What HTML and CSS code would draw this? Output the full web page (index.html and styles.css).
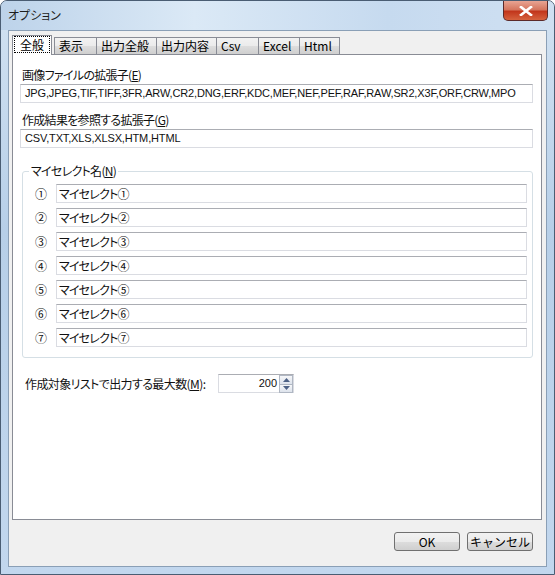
FILE: index.html
```html
<!DOCTYPE html>
<html lang="ja">
  <head>
    <meta charset="UTF-8" />
    <title>オプション</title>
    <link rel="stylesheet" href="styles.css">
  </head>
  <body>
    <div class="window">
      <div class="titlebar">
        <span class="title">オプション</span>
        <button class="close-btn">
          <svg width="14" height="10" viewBox="0 0 14 10">
            <path d="M2 1 L12 9 M12 1 L2 9" stroke="#fff" stroke-width="2.6" stroke-linecap="square" />
          </svg>
        </button>
      </div>

      <div class="client">
        <div class="tabs">
          <div class="tab active"><span class="focus">全般</span></div>
          <div class="tab tab-2">表示</div>
          <div class="tab tab-4">出力全般</div>
          <div class="tab tab-4">出力内容</div>
          <div class="tab tab-2">Csv</div>
          <div class="tab tab-excel">Excel</div>
          <div class="tab tab-html">Html</div>
        </div>

        <div class="panel">
          <label class="field-label first">画像ファイルの拡張子(<u>E</u>)</label>
          <div class="textbox">JPG,JPEG,TIF,TIFF,3FR,ARW,CR2,DNG,ERF,KDC,MEF,NEF,PEF,RAF,RAW,SR2,X3F,ORF,CRW,MPO</div>

          <label class="field-label">作成結果を参照する拡張子(<u>G</u>)</label>
          <div class="textbox">CSV,TXT,XLS,XLSX,HTM,HTML</div>

          <fieldset class="group">
            <legend>マイセレクト名(<u>N</u>)</legend>
            <div class="select-row"><span class="num">①</span><div class="textbox">マイセレクト①</div></div>
            <div class="select-row"><span class="num">②</span><div class="textbox">マイセレクト②</div></div>
            <div class="select-row"><span class="num">③</span><div class="textbox">マイセレクト③</div></div>
            <div class="select-row"><span class="num">④</span><div class="textbox">マイセレクト④</div></div>
            <div class="select-row"><span class="num">⑤</span><div class="textbox">マイセレクト⑤</div></div>
            <div class="select-row"><span class="num">⑥</span><div class="textbox">マイセレクト⑥</div></div>
            <div class="select-row"><span class="num">⑦</span><div class="textbox">マイセレクト⑦</div></div>
          </fieldset>

          <div class="max-row">
            <span class="max-label">作成対象リストで出力する最大数(<u>M</u>):</span>
            <div class="spinner">
              <span class="spin-value">200</span>
              <div class="spin-buttons">
                <div class="spin-btn"><svg width="7" height="4" viewBox="0 0 7 4"><path d="M0 4 L3.5 0 L7 4 Z" fill="#4d6185" /></svg></div>
                <div class="spin-btn"><svg width="7" height="4" viewBox="0 0 7 4"><path d="M0 0 L3.5 4 L7 0 Z" fill="#4d6185" /></svg></div>
              </div>
            </div>
          </div>
        </div>

        <div class="footer">
          <button class="btn">OK</button>
          <button class="btn">キャンセル</button>
        </div>
      </div>
    </div>
  </body>
</html>
```
FILE: styles.css
```css
body {
  margin: 0;
  padding: 0;
  background-color: #ffffff;
  font-family: "Noto Sans CJK JP", "Liberation Sans", sans-serif;
  font-size: 12px;
  font-feature-settings: "palt";
  color: #111;
}

.window {
  width: 555px;
  height: 575px;
  box-sizing: border-box;
  border-radius: 7px 7px 0 0;
  border: 1px solid #4a5d73;
  background: linear-gradient(180deg, #bcd3ea 0%, #cfe0f1 5%, #b7cfe8 40%, #c2d7ee 100%);
  display: flex;
  flex-direction: column;
}

.titlebar {
  height: 29px;
  display: flex;
  align-items: flex-start;
  justify-content: space-between;
  background: linear-gradient(90deg, #bdd3ea 0%, #dbe9f6 35%, #c6daef 70%, #cfe0f2 100%);
  border-radius: 6px 6px 0 0;
}

.title {
  margin: 5px 0 0 7px;
  font-size: 12px;
  color: #1e1e1e;
}

.close-btn {
  width: 45px;
  height: 20px;
  margin-right: 6px;
  border: 1px solid #5b2a2a;
  border-top: none;
  border-radius: 0 0 5px 5px;
  background: linear-gradient(180deg, #e8a493 0%, #d5765f 45%, #c2361c 55%, #d6623e 100%);
  display: flex;
  align-items: center;
  justify-content: center;
  padding: 0;
}

.client {
  margin: 0 7px 7px 7px;
  flex: 1;
  background-color: #f0f0f0;
  border: 1px solid #8a9fb6;
  padding: 3px 4px 0 3px;
  display: flex;
  flex-direction: column;
}

.tabs {
  display: flex;
  align-items: flex-end;
  height: 20px;
  padding-left: 2px;
  position: relative;
  z-index: 1;
}

.tab {
  height: 16px;
  box-sizing: content-box;
  padding: 0 0 0 4px;
  border: 1px solid #898c95;
  border-bottom: none;
  margin-right: -1px;
  background: linear-gradient(180deg, #f2f2f2 0%, #ebebeb 50%, #dddddd 51%, #cfcfcf 100%);
  line-height: 16px;
  font-size: 12px;
  color: #000;
  white-space: nowrap;
}

.tab-2 { width: 37px; }
.tab-4 { width: 55px; }
.tab-excel { width: 36px; }
.tab-html { width: 35px; }

.tab.active {
  width: auto;
  height: 19px;
  margin-right: 2px;
  margin-left: -2px;
  padding: 0 1px;
  background: #ffffff;
  margin-bottom: -1px;
  line-height: 18px;
}

.tab.active .focus {
  display: inline-block;
  border: 1px dotted #000;
  padding: 0 5px;
  line-height: 15px;
}

.panel {
  height: 466px;
  box-sizing: border-box;
  border: 1px solid #898c95;
  background-color: #ffffff;
  padding: 0 8px 0 7px;
  display: flex;
  flex-direction: column;
}

.field-label {
  display: block;
  height: 15px;
  line-height: 15px;
  margin: 9px 0 2px 2px;
  letter-spacing: -0.7px;
}

.field-label.first {
  margin-top: 12px;
}

.textbox {
  height: 19px;
  box-sizing: border-box;
  border: 1px solid #dadce2;
  border-top-color: #abadb3;
  background-color: #fff;
  padding: 0 4px;
  line-height: 17px;
  font-family: "Liberation Sans", "Noto Sans CJK JP", sans-serif;
  font-size: 11px;
  letter-spacing: -0.15px;
  white-space: nowrap;
  overflow: hidden;
}

.group {
  margin: 16px 0 0 2px;
  padding: 6px 5px 10px 0;
  border: 1px solid #d5dfe5;
  border-radius: 3px;
  display: flex;
  flex-direction: column;
  gap: 5px;
}

.group legend {
  padding: 0 2px;
  margin-left: 6px;
  line-height: 14px;
  letter-spacing: -0.7px;
}

.select-row {
  display: flex;
  align-items: center;
}

.select-row .num {
  width: 33px;
  box-sizing: border-box;
  padding-left: 12px;
  font-size: 12px;
  flex: none;
}

.select-row .textbox {
  flex: 1;
  padding-left: 2px;
  font-family: "Noto Sans CJK JP", sans-serif;
  font-size: 12px;
  letter-spacing: -0.8px;
  line-height: 17px;
}

.max-row {
  display: flex;
  align-items: center;
  margin-top: 16px;
  padding-left: 5px;
}

.max-label {
  width: 193px;
  white-space: nowrap;
  letter-spacing: -0.6px;
}

.spinner {
  width: 76px;
  height: 19px;
  box-sizing: border-box;
  border: 1px solid #dadce2;
  border-top-color: #abadb3;
  display: flex;
  background: #fff;
}

.spin-value {
  flex: 1;
  text-align: right;
  padding-right: 2px;
  line-height: 17px;
  font-family: "Liberation Sans", sans-serif;
  font-size: 11px;
}

.spin-buttons {
  width: 14px;
  display: flex;
  flex-direction: column;
}

.spin-btn {
  flex: 1;
  border: 1px solid #b0b7c3;
  margin-bottom: -1px;
  background: linear-gradient(180deg, #f6f7f9 0%, #dde3ec 100%);
  display: flex;
  align-items: center;
  justify-content: center;
}

.footer {
  flex: 1;
  display: flex;
  justify-content: flex-end;
  align-items: flex-start;
  padding-top: 12px;
  padding-right: 9px;
  gap: 7px;
}

.btn {
  width: 66px;
  height: 19px;
  border: 1px solid #707070;
  border-radius: 3px;
  background: linear-gradient(180deg, #f2f2f2 0%, #ebebeb 50%, #dddddd 51%, #cfcfcf 100%);
  font-family: "Noto Sans CJK JP", "Liberation Sans", sans-serif;
  font-size: 12px;
  padding: 0;
  line-height: 16px;
  color: #000;
}
```
